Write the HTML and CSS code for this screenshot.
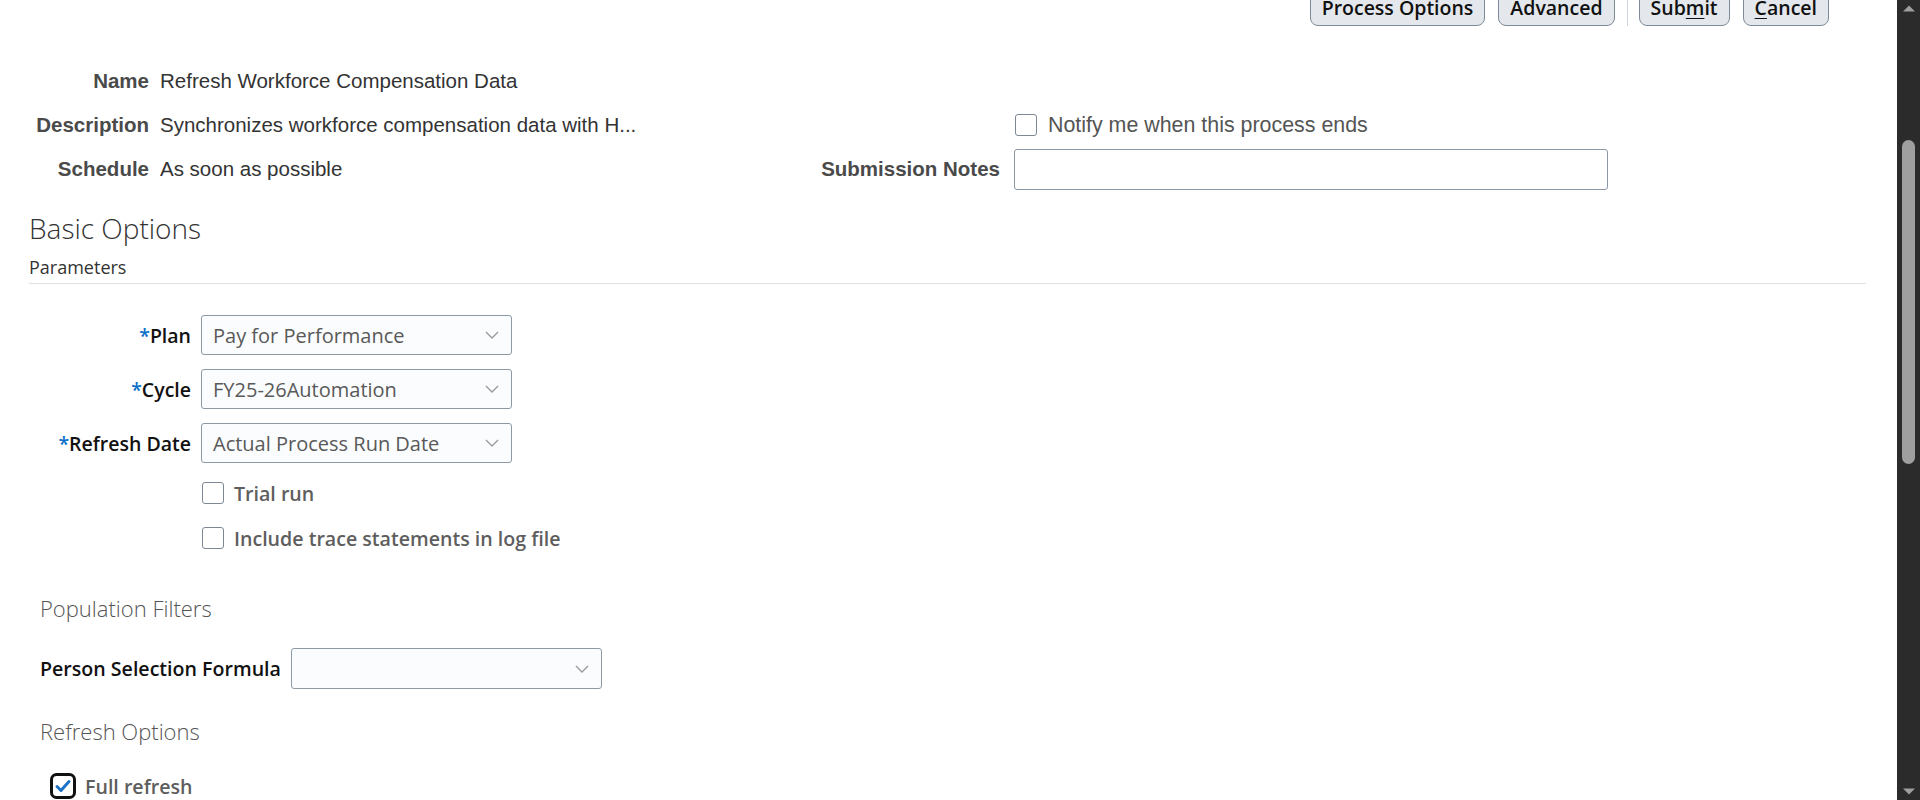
FILE: index.html
```html
<!DOCTYPE html>
<html lang="en">
<head>
<meta charset="utf-8">
<title>Refresh Workforce Compensation Data</title>
<link rel="stylesheet" href="styles.css">
</head>
<body>
<div class="app">
  <main class="page">
    <div class="toolbar">
      <button class="btn">Process Options</button>
      <button class="btn">Advanced</button>
      <span class="tb-sep"></span>
      <button class="btn">Sub<u>m</u>it</button>
      <button class="btn"><u>C</u>ancel</button>
    </div>

    <div class="info">
      <div class="lbl">Name</div>
      <div class="val">Refresh Workforce Compensation Data</div>
      <div></div>
      <div></div>

      <div class="lbl">Description</div>
      <div class="val">Synchronizes workforce compensation data with H...</div>
      <div></div>
      <div class="notify"><span class="cb"></span>Notify me when this process ends</div>

      <div class="lbl">Schedule</div>
      <div class="val">As soon as possible</div>
      <div class="lbl lbl-r">Submission Notes</div>
      <div class="notes"></div>
    </div>

    <section class="basic">
      <h2 class="h-basic">Basic Options</h2>
      <div class="subhead">Parameters</div>

      <div class="params">
        <div class="prow">
          <span class="plbl"><span class="req">*</span>Plan</span>
          <div class="select"><span>Pay for Performance</span><svg class="chev" width="14" height="8" viewBox="0 0 14 8"><path d="M1 1l6 6 6-6" fill="none" stroke="#9b9b9b" stroke-width="1.4"/></svg></div>
        </div>
        <div class="prow">
          <span class="plbl"><span class="req">*</span>Cycle</span>
          <div class="select"><span>FY25-26Automation</span><svg class="chev" width="14" height="8" viewBox="0 0 14 8"><path d="M1 1l6 6 6-6" fill="none" stroke="#9b9b9b" stroke-width="1.4"/></svg></div>
        </div>
        <div class="prow">
          <span class="plbl"><span class="req">*</span>Refresh Date</span>
          <div class="select"><span>Actual Process Run Date</span><svg class="chev" width="14" height="8" viewBox="0 0 14 8"><path d="M1 1l6 6 6-6" fill="none" stroke="#9b9b9b" stroke-width="1.4"/></svg></div>
        </div>
        <div class="crow crow-first"><span class="cb"></span>Trial run</div>
        <div class="crow"><span class="cb"></span>Include trace statements in log file</div>
      </div>

      <div class="sub">
        <h3 class="h-sub h-pop">Population Filters</h3>
        <div class="frow">
          <span class="flbl">Person Selection Formula</span>
          <div class="select select-f"><span></span><svg class="chev" width="14" height="8" viewBox="0 0 14 8"><path d="M1 1l6 6 6-6" fill="none" stroke="#9b9b9b" stroke-width="1.4"/></svg></div>
        </div>

        <h3 class="h-sub h-ref">Refresh Options</h3>
        <div class="crow crow-full">
          <svg class="cb-on" width="26" height="26" viewBox="0 0 26 26"><rect x="1.5" y="1.5" width="23" height="23" rx="5" fill="#fff" stroke="#111" stroke-width="3"/><path d="M7 13.5l4 4 8-9" fill="none" stroke="#1b72c6" stroke-width="3" stroke-linecap="round" stroke-linejoin="round"/></svg>
          Full refresh
        </div>
      </div>
    </section>
  </main>

  <div class="scrollbar">
    <svg class="sb-arrow" width="14" height="8" viewBox="0 0 14 8"><path d="M1 7.5L7 1.5l6 6z" fill="#9f9f9f"/></svg>
    <div class="sb-thumb"></div>
    <div class="sb-fill"></div>
    <svg class="sb-arrow" width="14" height="8" viewBox="0 0 14 8"><path d="M1 0.5L7 6.5l6-6z" fill="#9f9f9f"/></svg>
  </div>
</div>
</body>
</html>
```

FILE: styles.css
```css
* { box-sizing: border-box; }

html, body {
  margin: 0;
  height: 100%;
  overflow: hidden;
  background: #fff;
}

body {
  font-family: "Open Sans", "Noto Sans", sans-serif;
  color: #333;
}

.app {
  display: flex;
  height: 800px;
}

.page {
  flex: 1;
  min-width: 0;
}

/* toolbar */
.toolbar {
  height: 26px;
  display: flex;
  justify-content: flex-end;
  align-items: flex-end;
  gap: 13px;
  padding-right: 68px;
}

.btn {
  height: 36px;
  padding: 0 11px;
  border: 1px solid #7d8a97;
  border-radius: 8px;
  background: #e4e8ec;
  font: 600 19.5px "Open Sans", sans-serif;
  color: #111;
  line-height: 1;
}

.btn u { text-underline-offset: 3px; }

.tb-sep {
  width: 1px;
  height: 26px;
  background: #cfd6dd;
  margin: 0 -2px 0 -1px;
}

/* info grid */
.info {
  display: grid;
  grid-template-columns: 160px 480px 374px 594px;
  grid-auto-rows: 44px;
  align-items: center;
  margin-top: 33px;
  font-family: "Liberation Sans", Arial, sans-serif;
  font-size: 20.5px;
}

.info .lbl {
  text-align: right;
  padding-right: 11px;
  font-weight: bold;
  color: #4a4a4a;
  white-space: nowrap;
}

.info .lbl-r { padding-right: 14px; }

.info .val {
  color: #333;
  white-space: nowrap;
}

.notify {
  display: flex;
  align-items: center;
  gap: 11px;
  color: #555;
  font-size: 21.4px;
  white-space: nowrap;
  padding-left: 1px;
}

.notes {
  height: 41px;
  border: 1px solid #8b98a5;
  border-radius: 3px;
  background: #fff;
}

.cb {
  flex: none;
  width: 22px;
  height: 22px;
  border: 1px solid #7c8894;
  border-radius: 3px;
  background: #fff;
}

/* basic options */
.basic {
  padding: 0 31px 0 29px;
}

.h-basic {
  margin: 19px 0 0;
  font: 300 28px/36px "Open Sans", sans-serif;
  color: #333;
}

.subhead {
  margin-top: 9px;
  font-size: 18px;
  line-height: 24px;
  color: #333;
  padding-bottom: 4px;
  border-bottom: 1px solid #dce1e6;
}

.params {
  display: flex;
  flex-direction: column;
  padding-top: 17px;
}

.prow {
  display: flex;
  align-items: center;
  margin-top: 14px;
}

.plbl {
  width: 162px;
  margin-right: 10px;
  text-align: right;
  font-weight: 600;
  font-size: 19.5px;
  color: #111;
  white-space: nowrap;
}

.req { color: #0a6fc9; }

.select {
  width: 311px;
  height: 40px;
  border: 1px solid #8d9aa6;
  border-radius: 3px;
  background: #fbfcfd;
  display: flex;
  align-items: center;
  justify-content: space-between;
  padding: 0 12px 0 11px;
  font-size: 20px;
  font-weight: 500;
  color: #595959;
  white-space: nowrap;
}

.chev { flex: none; }

.crow {
  display: flex;
  align-items: center;
  gap: 10px;
  height: 30px;
  margin-left: 173px;
  margin-top: 15px;
  font-weight: 600;
  font-size: 19.6px;
  color: #5e5e5e;
  white-space: nowrap;
}

.crow-first { margin-top: 15px; }

/* sub sections */
.sub { padding-left: 11px; }

.h-sub {
  margin: 0;
  font: 300 22px/30px "Open Sans", sans-serif;
  color: #555;
}

.h-pop { margin-top: 40px; }
.h-ref { margin-top: 27px; }

.frow {
  display: flex;
  align-items: center;
  margin-top: 25px;
}

.flbl {
  width: 251px;
  font-weight: 600;
  font-size: 19.6px;
  color: #111;
  white-space: nowrap;
}

.select-f { height: 41px; }

.crow-full {
  margin-left: 10px;
  margin-top: 25px;
  gap: 9px;
}

.cb-on { flex: none; }

/* scrollbar */
.scrollbar {
  width: 23px;
  flex: none;
  background: #2b2b2b;
  display: flex;
  flex-direction: column;
  align-items: center;
  padding: 4px 0;
}

.sb-arrow { flex: none; }

.sb-thumb {
  width: 13px;
  height: 324px;
  margin-top: 128px;
  border-radius: 7px;
  background: #9f9f9f;
}

.sb-fill { flex: 1; }
```
